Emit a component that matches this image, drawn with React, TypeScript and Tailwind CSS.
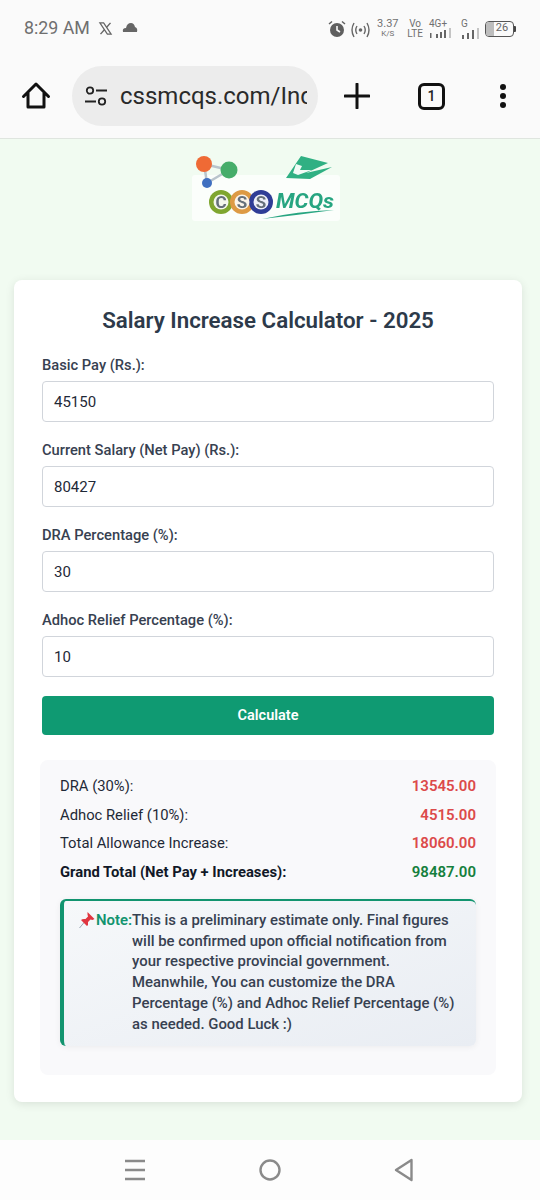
import React from "react";

const font = { fontFamily: "Roboto, 'Liberation Sans', sans-serif" };

function Field({ label, value }: { label: string; value: string }) {
  return (
    <div className="mb-[18px]">
      <div className="text-[14.700px] leading-[20px] font-medium text-[#374151] mb-[6px]">{label}</div>
      <div className="h-[41px] border border-[#d1d5db] rounded-[4px] bg-white flex items-center pl-[11px] pr-[12px] pt-[1px] text-[15px] text-[#1f2937]">{value}</div>
    </div>
  );
}

function Row({ label, value, bold, color }: { label: string; value: string; bold?: boolean; color: string }) {
  return (
    <div className={`flex justify-between h-[28.5px] items-center text-[14.800px] ${bold ? "font-bold text-[#111827]" : "text-[#1f2937]"}`}>
      <span>{label}</span>
      <span className={`text-[15px] font-semibold ${color}`}>{value}</span>
    </div>
  );
}

function Logo() {
  return (
    <svg width="160" height="80" viewBox="0 0 160 80" className="block blur-[0.4px]">
      <rect x="4" y="22" width="148" height="46" rx="3" fill="#fbfefb" />
      <path d="M16 11 L41 17 M16 11 L19 30 M19 30 L41 17" stroke="#b9c4cc" strokeWidth="2.500" fill="none" />
      <circle cx="16" cy="11" r="8" fill="#ef6a35" />
      <circle cx="41" cy="17" r="8.500" fill="#46ad6a" />
      <circle cx="19" cy="30" r="5" fill="#3f6fc0" />
      <circle cx="33" cy="49" r="12" fill="#7fa62f" />
      <circle cx="54" cy="49" r="12" fill="#dd9a44" />
      <circle cx="73" cy="49" r="12" fill="#2f3d96" />
      <circle cx="33" cy="49" r="7.500" fill="#f4f7ee" />
      <circle cx="54" cy="49" r="7.500" fill="#fbf4e9" />
      <circle cx="73" cy="49" r="7.500" fill="#eef0f9" />
      <text x="33" y="55" textAnchor="middle" fontSize="17" fontWeight="700" fill="#66707a" fontFamily="Roboto, sans-serif">C</text>
      <text x="54" y="55" textAnchor="middle" fontSize="17" fontWeight="700" fill="#66707a" fontFamily="Roboto, sans-serif">S</text>
      <text x="73" y="55" textAnchor="middle" fontSize="17" fontWeight="700" fill="#66707a" fontFamily="Roboto, sans-serif">S</text>
      <text x="88" y="55" fontSize="21" fontWeight="700" fontStyle="italic" fill="#27a581" fontFamily="Roboto, sans-serif" textLength="58" lengthAdjust="spacingAndGlyphs">MCQs</text>
      <path d="M74 66 Q110 58 146 57 Q110 62 74 66Z" fill="#27a581" />
      <path d="M113 3 L140 10 L118 20 L144 14 L122 26 L98 25Z" fill="#30b083" />
      <path d="M108 11 L114 13 L112 17 L124 17 L110 22 L105 20Z" fill="#f2fbf6" />
    </svg>
  );
}

export default function App() {
  return (
    <div className="w-[540px] h-[1200px] flex flex-col bg-[#f1fbf1] overflow-hidden" style={font}>
      {/* Phone and browser chrome */}
      <div className="h-[139px] shrink-0 bg-[#fafafa] border-b border-[#dfe5df]">
        <div className="h-[58px] flex items-center justify-between pl-[24px] pr-[24px] pb-[1px]">
          <div className="flex items-center gap-[8px] text-[#6f6f6f]">
            <span className="text-[17.800px]">8:29 AM</span>
            <svg width="15" height="15" viewBox="0 0 24 24">
              <path d="M3 3 L9 3 L21 21 L15 21Z" fill="none" stroke="#666" strokeWidth="2" />
              <path d="M20 3 L13.500 10.500 M10.500 13.500 L4 21" stroke="#666" strokeWidth="2.200" />
            </svg>
            <svg width="16" height="10" viewBox="0 0 16 10" className="ml-[1px] mb-[3px]">
              <path d="M1 10 Q0 6 4 6 Q5 1 9 1 Q12 1 13 5 Q16 6 15 10Z" fill="#666" />
            </svg>
          </div>
          <div className="flex items-center gap-[7px] text-[#707070]">
            <svg width="18" height="18" viewBox="0 0 18 18">
              <circle cx="9" cy="10" r="7" fill="#5f5f5f" />
              <path d="M9 6 V10 L12 12" stroke="#fafafa" strokeWidth="1.600" fill="none" />
              <path d="M1 4 L4 1.500 M17 4 L14 1.500" stroke="#5f5f5f" strokeWidth="1.500" />
            </svg>
            <svg width="21" height="20" viewBox="0 0 21 20" className="-ml-[3px]">
              <circle cx="10.500" cy="11" r="1.800" fill="#666" />
              <path d="M7 7 Q4.500 11 7 15 M14 7 Q16.500 11 14 15 M4 4 Q0 11 4 18 M17 4 Q21 11 17 18" stroke="#666" strokeWidth="1.400" fill="none" />
            </svg>
            <div className="flex flex-col items-center w-[21px] -ml-[1px]">
              <span className="text-[11px] leading-[10px]">3.37</span>
              <span className="text-[8px] leading-[10px]">K/S</span>
            </div>
            <div className="flex flex-col items-center text-[10px] leading-[10px] ml-[2px]">
              <span>Vo</span>
              <span>LTE</span>
            </div>
            <div className="flex flex-col items-start text-[10px] leading-[9px] -ml-[1px]">
              <span>4G+</span>
              <svg width="23" height="10" viewBox="0 0 23 10">
                <rect x="1" y="5" width="1.500" height="5" fill="#666" />
                <rect x="7" y="6" width="2" height="4" fill="#666" />
                <rect x="11" y="4" width="2" height="6" fill="#666" />
                <rect x="15" y="2" width="2" height="8" fill="#666" />
                <rect x="20" y="0" width="2" height="10" fill="#c4c4c4" />
              </svg>
            </div>
            <div className="flex flex-col items-start text-[10px] leading-[9px] ml-[2px]">
              <span>G</span>
              <svg width="19" height="11" viewBox="0 0 19 11">
                <rect x="1" y="7" width="2" height="4" fill="#666" />
                <rect x="6" y="5" width="2" height="6" fill="#666" />
                <rect x="11" y="2" width="2" height="9" fill="#666" />
                <rect x="16" y="0" width="2" height="11" fill="#c4c4c4" />
              </svg>
            </div>
            <div className="flex items-center -ml-[2px]">
              <div className="relative w-[29px] h-[16px] rounded-[4px] border border-[#555] flex items-center justify-center text-[11px] text-[#666] overflow-hidden">
                <div className="absolute left-0 top-0 bottom-0 w-[8px] bg-[#bdbdbd]" />
                <span className="relative pl-[5px]">26</span>
              </div>
              <div className="w-[2px] h-[6px] bg-[#444] rounded-r-[1px]" />
            </div>
          </div>
        </div>
        <div className="h-[80px] flex items-center pl-[21px] pb-[4px]">
          <svg width="30" height="30" viewBox="0 0 30 30" className="shrink-0">
            <path d="M2.500 15.500 L15 3 L27.500 15.500 M7 12 V26 H23 V12" fill="none" stroke="#111" strokeWidth="3" strokeLinejoin="round" strokeLinecap="round" />
          </svg>
          <div className="ml-[21px] w-[246px] h-[60px] rounded-full bg-[#ececec] flex items-center pl-[13px] overflow-hidden shrink-0">
            <svg width="22" height="20" viewBox="0 0 22 20" className="shrink-0">
              <circle cx="5" cy="4.500" r="3.200" fill="none" stroke="#222" strokeWidth="1.800" />
              <path d="M11 4.500 H22 M0 15.500 H11" stroke="#222" strokeWidth="1.800" />
              <circle cx="17" cy="15.500" r="3.200" fill="none" stroke="#222" strokeWidth="1.800" />
            </svg>
            <span className="ml-[13px] text-[24px] text-[#2a2a2a] whitespace-nowrap w-[187px] overflow-hidden">cssmcqs.com/Index</span>
          </div>
          <svg width="26" height="26" viewBox="0 0 26 26" className="ml-[26px] shrink-0">
            <path d="M13 1 V25 M1 13 H25" stroke="#111" strokeWidth="3" strokeLinecap="round" />
          </svg>
          <div className="ml-[48px] w-[27px] h-[27px] border-[3px] border-[#111] rounded-[6px] flex items-center justify-center text-[14px] font-medium text-[#222] shrink-0">1</div>
          <div className="ml-[55px] flex flex-col gap-[3px] shrink-0">
            <div className="w-[6px] h-[6px] rounded-full bg-[#111]" />
            <div className="w-[6px] h-[6px] rounded-full bg-[#111]" />
            <div className="w-[6px] h-[6px] rounded-full bg-[#111]" />
          </div>
        </div>
      </div>

      {/* Page */}
      <div className="flex-1 pl-[14px] pr-[18px] bg-[#f1fbf1]">
        <div className="h-[141px] flex justify-center pt-[14px]">
          <div className="pr-[1px]"><Logo /></div>
        </div>
        <div className="h-[822px] bg-white rounded-[8px] shadow-[0_2px_10px_rgba(0,0,0,0.10)] px-[28px] pt-[24px]">
          <h1 className="text-[22.300px] leading-[32px] font-semibold text-[#2d3a4a] text-center mb-[19px]">Salary Increase Calculator - 2025</h1>
          <Field label="Basic Pay (Rs.):" value="45150" />
          <Field label="Current Salary (Net Pay) (Rs.):" value="80427" />
          <Field label="DRA Percentage (%):" value="30" />
          <Field label="Adhoc Relief Percentage (%):" value="10" />
          <div className="h-[39px] mt-[19px] rounded-[4px] bg-[#0f9a72] text-white text-[14.500px] font-semibold flex items-center justify-center">Calculate</div>
          <div className="mt-[25px] -mx-[2px] h-[315px] bg-[#f9f9fb] rounded-[8px] px-[20px] pt-[12px]">
            <Row label="DRA (30%):" value="13545.00" color="text-[#dc4a4a]" />
            <Row label="Adhoc Relief (10%):" value="4515.00" color="text-[#dc4a4a]" />
            <Row label="Total Allowance Increase:" value="18060.00" color="text-[#dc4a4a]" />
            <Row label="Grand Total (Net Pay + Increases):" value="98487.00" bold color="text-[#15803d]" />
            <div className="mt-[13px] h-[147px] rounded-[6px] border-l-[4px] border-t-[2px] border-[#12946f] bg-gradient-to-br from-[#f6f8fa] to-[#e9edf3] shadow-[0_1px_6px_rgba(0,0,0,0.06)] flex pl-[14px] pr-[14px] pt-[9px] text-[14.900px] leading-[20.700px] font-medium text-[#374151]">
              <svg width="18" height="18" viewBox="0 0 17 18" className="shrink-0 mt-[1px]">
                <path d="M1 17 L6 11" stroke="#9aa6b2" strokeWidth="1" />
                <path d="M9 1 L16 8 L14 9 L12 8.500 L9.500 11 Q10 14 8.500 15 L2.500 9 Q4 7.500 7 8 L9.500 5.500 L9 3.500Z" fill="#e0353f" />
              </svg>
              <span className="shrink-0 font-semibold text-[#12946f]">Note:</span>
              <span className="w-[330px]">This is a preliminary estimate only. Final figures will be confirmed upon official notification from your respective provincial government. Meanwhile, You can customize the DRA Percentage (%) and Adhoc Relief Percentage (%) as needed. Good Luck :)</span>
            </div>
          </div>
        </div>
      </div>

      {/* Navigation bar */}
      <div className="h-[60px] shrink-0 bg-[#fdfdfd] flex items-center justify-between pl-[124px] pr-[126px] pb-[1px]">
        <svg width="22" height="22" viewBox="0 0 22 22">
          <path d="M1 2 H21 M1 11 H21 M1 20 H21" stroke="#8a8a8a" strokeWidth="2.400" />
        </svg>
        <svg width="22" height="22" viewBox="0 0 22 22">
          <circle cx="11" cy="11" r="9.500" fill="none" stroke="#8a8a8a" strokeWidth="2.400" />
        </svg>
        <svg width="20" height="24" viewBox="0 0 20 24">
          <path d="M17.500 2 L2 12 L17.500 22Z" fill="none" stroke="#8a8a8a" strokeWidth="2.400" strokeLinejoin="round" />
        </svg>
      </div>
    </div>
  );
}
